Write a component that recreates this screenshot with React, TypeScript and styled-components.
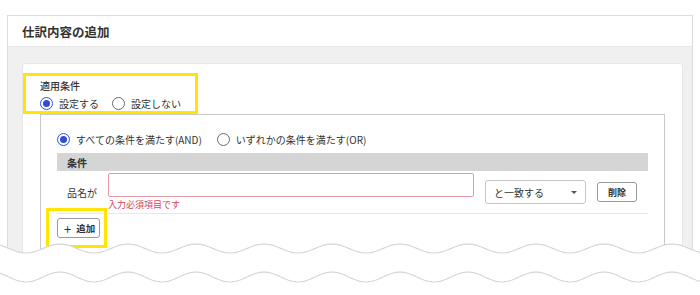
import styled, { createGlobalStyle } from 'styled-components';

const GlobalStyle = createGlobalStyle`
  body {
    margin: 0;
    background: #fff;
    font-family: "Noto Sans CJK JP", "Noto Sans", sans-serif;
    color: #333;
  }
`;

const WAVE_PERIOD = 68;
const WAVE_CREST = 60;

const wavePoints = (mid: number, amp: number) => {
  const pts: string[] = [];
  for (let x = -4; x <= 704; x += 2) {
    const y = mid - amp * Math.cos((2 * Math.PI * (x - WAVE_CREST)) / WAVE_PERIOD);
    pts.push(`${x},${y.toFixed(2)}`);
  }
  return pts;
};

const TornEdge = () => {
  const top = wavePoints(248.5, 4.5);
  const bottom = wavePoints(277, 5);
  return (
    <EdgeSvg width="700" height="295" viewBox="0 0 700 295">
      <path d={`M${top.join(' L')} L704,300 L-4,300 Z`} fill="#fff" />
      <path d={`M${top.join(' L')}`} fill="none" stroke="#d6d6d6" strokeWidth="1.2" />
      <path d={`M${bottom.join(' L')}`} fill="none" stroke="#d6d6d6" strokeWidth="1.2" />
    </EdgeSvg>
  );
};

const Radio = ({ checked, label }: { checked?: boolean; label: string }) => (
  <RadioOption>
    <RadioCircle $checked={checked} />
    <span>{label}</span>
  </RadioOption>
);

export default function App() {
  return (
    <>
      <GlobalStyle />
      <Page>
        <Card>
          <Header>仕訳内容の追加</Header>
          <Body>
            <Panel>
              <ApplyHighlight>
                <FieldTitle>適用条件</FieldTitle>
                <RadioRow $gap={13}>
                  <Radio checked label="設定する" />
                  <Radio label="設定しない" />
                </RadioRow>
              </ApplyHighlight>
              <ConditionBox>
                <RadioRow $gap={15}>
                  <Radio checked label="すべての条件を満たす(AND)" />
                  <Radio label="いずれかの条件を満たす(OR)" />
                </RadioRow>
                <TableHead>条件</TableHead>
                <CondRow>
                  <FieldLabel>品名が</FieldLabel>
                  <InputCol>
                    <TextInput />
                    <ErrorText>入力必須項目です</ErrorText>
                  </InputCol>
                  <Select>
                    <span>と一致する</span>
                    <Caret />
                  </Select>
                  <DeleteButton>削除</DeleteButton>
                </CondRow>
                <AddRow>
                  <AddHighlight>
                    <AddButton>
                      <Plus>+</Plus>
                      追加
                    </AddButton>
                  </AddHighlight>
                </AddRow>
              </ConditionBox>
            </Panel>
          </Body>
        </Card>
        <TornEdge />
      </Page>
    </>
  );
}

const Page = styled.div`
  position: relative;
  height: 295px;
  overflow: hidden;
  padding-top: 15px;
  box-sizing: border-box;
`;

const EdgeSvg = styled.svg`
  position: absolute;
  top: 0;
  left: 0;
  pointer-events: none;
`;

const Card = styled.div`
  margin: 0 7px;
  border: 1px solid #dcdcdc;
  border-bottom: none;
`;

const Header = styled.div`
  display: flex;
  align-items: center;
  height: 30px;
  padding-left: 14px;
  font-size: 12.5px;
  font-weight: 700;
  color: #333;
  border-bottom: 1px solid #e6e6e6;
`;

const Body = styled.div`
  height: 260px;
  padding: 16px 9px 0 14px;
  background: #f0f0f0;
`;

const Panel = styled.div`
  height: 100%;
  padding: 9px 17px 0 0;
  background: #fff;
  border: 1px solid #e6e6e6;
  border-radius: 3px;
`;

const ApplyHighlight = styled.div`
  width: 175px;
  box-sizing: border-box;
  padding: 3px 0 0 14px;
  border: 3px solid #ffe500;
`;

const FieldTitle = styled.div`
  font-size: 10px;
  line-height: 14px;
  font-weight: 500;
`;

const RadioRow = styled.div<{ $gap: number }>`
  display: flex;
  align-items: center;
  gap: ${p => p.$gap}px;
  height: 16px;
  margin-top: 2px;
`;

const RadioOption = styled.label`
  display: flex;
  align-items: center;
  gap: 6px;
  font-size: 10px;
  color: #333;
`;

const RadioCircle = styled.span<{ $checked?: boolean }>`
  position: relative;
  width: 13px;
  height: 13px;
  box-sizing: border-box;
  border-radius: 50%;
  border: 1.5px solid ${p => (p.$checked ? '#2f50d3' : '#6b6b6b')};
  &::after {
    content: '';
    display: ${p => (p.$checked ? 'block' : 'none')};
    position: absolute;
    inset: 2px;
    border-radius: 50%;
    background: #2f50d3;
  }
`;

const ConditionBox = styled.div`
  height: 200px;
  margin-left: 17px;
  padding: 14px 16px 0;
  border: 1px solid #c9c9c9;
  border-bottom: none;
`;

const TableHead = styled.div`
  display: flex;
  align-items: center;
  height: 18px;
  margin-top: 6px;
  padding-left: 10px;
  background: #d5d5d5;
  font-size: 10px;
  font-weight: 700;
`;

const CondRow = styled.div`
  display: flex;
  align-items: center;
  padding: 2px 0 2px 10px;
  border-bottom: 1px solid #e8e8e8;
`;

const FieldLabel = styled.span`
  width: 31px;
  margin-right: 10px;
  font-size: 10px;
`;

const InputCol = styled.div`
  display: flex;
  flex-direction: column;
  width: 366px;
`;

const TextInput = styled.div`
  height: 24px;
  box-sizing: border-box;
  border: 1px solid #e59aa5;
  border-radius: 2px;
`;

const ErrorText = styled.div`
  margin-top: 1px;
  font-size: 9px;
  line-height: 13px;
  color: #d3475c;
`;

const Select = styled.div`
  display: flex;
  align-items: center;
  justify-content: space-between;
  width: 101px;
  height: 24px;
  box-sizing: border-box;
  margin-left: 11px;
  padding: 0 8px 0 8px;
  border: 1px solid #c6c6c6;
  border-radius: 3px;
  font-size: 10px;
`;

const Caret = styled.span`
  width: 0;
  height: 0;
  border-left: 3px solid transparent;
  border-right: 3px solid transparent;
  border-top: 3px solid #555;
`;

const DeleteButton = styled.button`
  width: 40px;
  height: 20px;
  margin-left: 11px;
  padding: 0;
  background: #fff;
  border: 1px solid #9a9a9a;
  border-radius: 3px;
  font-family: inherit;
  font-size: 9px;
  font-weight: 700;
  color: #333;
`;

const AddRow = styled.div`
  display: flex;
  padding-top: 4px;
`;

const AddHighlight = styled.span`
  position: relative;
  display: inline-flex;
  &::after {
    content: '';
    position: absolute;
    inset: -10px -7px -10px -11px;
    border: 3px solid #ffe500;
    pointer-events: none;
  }
`;

const AddButton = styled.button`
  display: flex;
  align-items: center;
  gap: 5px;
  width: 43px;
  height: 20px;
  padding: 0 0 0 6px;
  background: #fff;
  border: 1px solid #9a9a9a;
  border-radius: 3px;
  font-family: inherit;
  font-size: 9.5px;
  font-weight: 700;
  color: #333;
`;

const Plus = styled.span`
  font-size: 13px;
  font-weight: 400;
  line-height: 1;
`;
